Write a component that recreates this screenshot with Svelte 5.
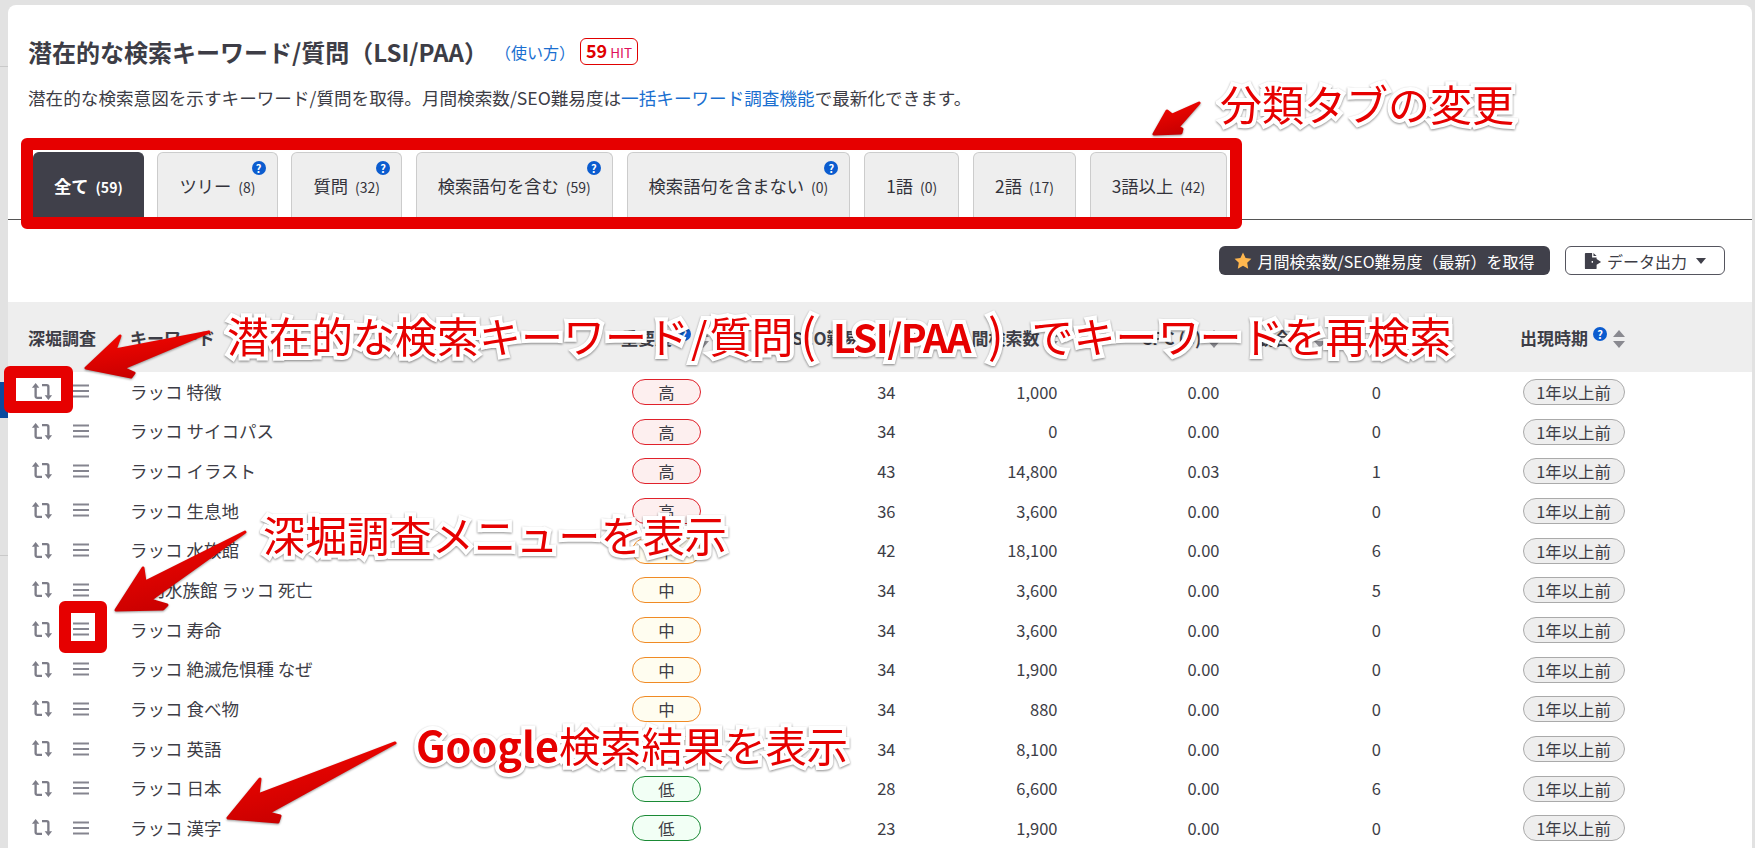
<script lang="ts">
  const tabs = [
    { label: '全て', count: 59, active: true },
    { label: 'ツリー', count: 8, help: true },
    { label: '質問', count: 32, help: true },
    { label: '検索語句を含む', count: 59, help: true },
    { label: '検索語句を含まない', count: 0, help: true },
    { label: '1語', count: 0 },
    { label: '2語', count: 17 },
    { label: '3語以上', count: 42 }
  ];

  const rows = [
    ['ラッコ 特徴', '高', 34, '1,000', '0.00', 0],
    ['ラッコ サイコパス', '高', 34, '0', '0.00', 0],
    ['ラッコ イラスト', '高', 43, '14,800', '0.03', 1],
    ['ラッコ 生息地', '高', 36, '3,600', '0.00', 0],
    ['ラッコ 水族館', '中', 42, '18,100', '0.00', 6],
    ['鳥羽水族館 ラッコ 死亡', '中', 34, '3,600', '0.00', 5],
    ['ラッコ 寿命', '中', 34, '3,600', '0.00', 0],
    ['ラッコ 絶滅危惧種 なぜ', '中', 34, '1,900', '0.00', 0],
    ['ラッコ 食べ物', '中', 34, '880', '0.00', 0],
    ['ラッコ 英語', '中', 34, '8,100', '0.00', 0],
    ['ラッコ 日本', '低', 28, '6,600', '0.00', 6],
    ['ラッコ 漢字', '低', 23, '1,900', '0.00', 0]
  ];

  const level: Record<string, string> = { '高': 'high', '中': 'mid', '低': 'low' };

  const arrows = [
    '209,332 115,350 120,336 86,368 131,377 134,373 123,368',
    '245,532 145,582 143,568 116,610 163,609 167,605 150,600',
    '395,743 258,795 260,779 228,818 278,822 280,816 268,813',
    '1199,103 1172,115 1167,111 1154,134 1181,133 1182,129 1178,127'
  ];
</script>

<div class="page">
  <div class="gutter">
    <i class="rule first"></i>
    <i class="nav-mark"></i>
    <i class="rule second"></i>
  </div>

  <main class="card">
    <div class="title-row">
      <h1>潜在的な検索キーワード/質問（LSI/PAA）</h1>
      <a class="howto" href="#howto">（使い方）</a>
      <span class="hit"><b>59</b> HIT</span>
    </div>
    <p class="desc">潜在的な検索意図を示すキーワード/質問を取得。月間検索数/SEO難易度は<a href="#bulk">一括キーワード調査機能</a>で最新化できます。</p>

    <div class="tabs">
      {#each tabs as tab}
        <button class="tab" class:active={tab.active} type="button">
          {tab.label}<small>({tab.count})</small>
          {#if tab.help}<span class="help corner">?</span>{/if}
        </button>
      {/each}
    </div>

    <div class="actions">
      <button class="btn dark" type="button">
        <svg viewBox="0 0 20 19" width="18" height="17" aria-hidden="true">
          <path d="M10 .6l2.9 6 6.5.9-4.700 4.600 1.100 6.500L10 15.500l-5.800 3.100 1.100-6.500L.6 7.500l6.500-.9z" />
        </svg>
        月間検索数/SEO難易度（最新）を取得
      </button>
      <button class="btn outline" type="button">
        <svg viewBox="0 0 20 20" width="18" height="18" aria-hidden="true">
          <path d="M2 1h7v5h5v4H8.500v2H14v6a1 1 0 0 1-1 1H2a1 1 0 0 1-1-1V2a1 1 0 0 1 1-1zM10.500 1l3.500 3.500h-3.500zM14 7.800l5 3.200-5 3.200v-2.200h-4v-2h4z" />
        </svg>
        データ出力
        <i class="caret"></i>
      </button>
    </div>

    <div class="table">
      <div class="grid thead">
        <div>深堀調査</div>
        <div>キーワード</div>
        <div class="th-imp">重要度<span class="help">?</span><span class="sort"></span></div>
        <div class="num">SEO難易度<span class="sort"></span></div>
        <div class="num">月間検索数<span class="sort"></span></div>
        <div class="num">CPC ($)<span class="sort"></span></div>
        <div class="num ads">競合性<span class="sort"></span></div>
        <div class="th-time">出現時期<span class="help">?</span><span class="sort"></span></div>
      </div>

      {#each rows as row}
        <div class="grid row">
          <div class="tools">
            <svg class="swap" viewBox="0 0 20 16" width="22" height="17" aria-hidden="true">
              <path d="M4 4v8.500a1.500 1.500 0 0 0 1.500 1.500H10M10 2h4.500A1.500 1.500 0 0 1 16 3.500V12" />
              <path class="head" d="M4 0l3.500 4.500h-7zM16 16l-3.500-4.500h7z" />
            </svg>
            <svg class="menu" viewBox="0 0 16 14" width="16" height="14" aria-hidden="true">
              <path d="M0 1.500h16M0 7h16M0 12.500h16" />
            </svg>
          </div>
          <div class="kw">{row[0]}</div>
          <div><span class="pill {level[row[1]]}">{row[1]}</span></div>
          <div class="num">{row[2]}</div>
          <div class="num">{row[3]}</div>
          <div class="num">{row[4]}</div>
          <div class="num">{row[5]}</div>
          <div class="when"><span class="pill age">1年以上前</span></div>
        </div>
      {/each}
    </div>
  </main>

  <!-- red markup drawn on top of the screenshot -->
  <div class="frame frame-tabs"></div>
  <div class="frame frame-swap"></div>
  <div class="frame frame-menu"></div>

  <svg class="arrows" viewBox="0 0 1755 848" aria-hidden="true">
    <defs>
      <linearGradient id="arrow-red" x1="0" y1="0" x2="0.4" y2="1">
        <stop offset="0" stop-color="#f80600" />
        <stop offset="1" stop-color="#c90000" />
      </linearGradient>
    </defs>
    {#each arrows as points}
      <polygon {points} />
    {/each}
  </svg>

  <div class="note n-tabs">分類タブの変更</div>
  <div class="note n-search">潜在的な検索キーワード<span class="slash">/</span>質問<span class="paren open">(</span><b class="lsi">LSI/PAA</b><span class="paren close">)</span>でキーワードを再検索</div>
  <div class="note n-menu">深堀調査メニューを表示</div>
  <div class="note n-google"><b>Google</b>検索結果を表示</div>
</div>

<style>
  :global(body) {
    margin: 0;
    background: #e2e2e2;
  }
  .page {
    position: relative;
    display: flex;
    width: 1755px;
    height: 848px;
    overflow: hidden;
    font-family: "Noto Sans CJK JP", "Noto Sans", sans-serif;
    color: #3d3d46;
  }
  .gutter {
    flex: 0 0 8px;
    display: flex;
    flex-direction: column;
  }
  .rule { height: 1px; background: #c9c9c9; }
  .rule.first { margin-top: 66px; }
  .rule.second { margin-top: 137px; }
  .nav-mark { height: 36px; margin-top: 315px; background: #0a4a9e; }

  .card {
    flex: 0 0 1744px;
    margin-top: 5px;
    padding-top: 33px;
    background: #fff;
    border-radius: 8px 8px 0 0;
    box-sizing: border-box;
  }
  .title-row {
    display: flex;
    align-items: center;
    height: 27px;
    padding-left: 20px;
  }
  h1 {
    margin: 0;
    font-size: 24px;
    font-weight: 700;
    line-height: 27px;
    white-space: nowrap;
  }
  .howto {
    margin-left: 7px;
    color: #1a6fd0;
    font-size: 16px;
    text-decoration: none;
  }
  .hit {
    display: inline-flex;
    align-items: baseline;
    gap: 3px;
    box-sizing: border-box;
    height: 27px;
    margin-left: 5px;
    padding: 0 5px;
    border: 1.500px solid #e00000;
    border-radius: 6px;
    color: #e0105a;
    font-size: 13.500px;
    line-height: 23px;
  }
  .hit b { color: #e00000; font-size: 18px; }
  .desc {
    margin: 21px 0 0;
    padding-left: 20px;
    font-size: 17.600px;
    line-height: 24px;
  }
  .desc a { color: #1a6fd0; text-decoration: none; }

  .tabs {
    display: flex;
    gap: 13.800px;
    height: 67px;
    margin-top: 42px;
    padding-left: 25px;
    border-bottom: 1px solid #555;
  }
  .tab {
    position: relative;
    height: 65px;
    padding: 0 21px;
    border: 1px solid #ccc;
    border-bottom: 0;
    border-radius: 6px 6px 0 0;
    background: #eee;
    color: #33333b;
    font: inherit;
    font-size: 17.300px;
  }
  .tab small { margin-left: 7px; font-size: 14px; }
  .tab.active {
    padding: 0 20px;
    border-color: #40404a;
    background: #40404a;
    color: #fff;
    font-weight: 700;
  }
  .help {
    display: inline-block;
    width: 14px;
    height: 14px;
    border-radius: 50%;
    background: #0b5ccf;
    color: #fff;
    font-size: 11px;
    font-weight: 700;
    line-height: 14px;
    text-align: center;
    vertical-align: 6px;
    margin-left: 5px;
  }
  .help.corner {
    position: absolute;
    top: 8px;
    right: 11px;
    margin: 0;
  }

  .actions {
    display: flex;
    justify-content: flex-end;
    gap: 15px;
    margin-top: 26px;
    padding-right: 27px;
  }
  .btn {
    display: inline-flex;
    align-items: center;
    justify-content: center;
    gap: 5px;
    box-sizing: border-box;
    height: 29px;
    border-radius: 6px;
    font: inherit;
    font-size: 16px;
  }
  .btn.dark {
    width: 331px;
    border: 0;
    background: #40404a;
    color: #fff;
  }
  .btn.dark svg { fill: #ffb74f; }
  .btn.outline {
    width: 160px;
    border: 1px solid #55555e;
    background: #fff;
    color: #3d3d46;
  }
  .btn.outline svg { fill: #40404a; }
  .caret {
    width: 0;
    height: 0;
    margin-left: 4px;
    border: 5px solid transparent;
    border-top: 6px solid #40404a;
    border-bottom: 0;
  }

  .table { margin-top: 27px; }
  .grid {
    display: grid;
    grid-template-columns: 122px 502px 69px 194.500px 162px 162px 161.500px 1fr;
    align-items: center;
  }
  .thead {
    height: 70px;
    background: #eee;
    font-size: 17px;
    font-weight: 700;
  }
  .thead > div:first-child { padding-left: 20px; }
  .th-imp {
    white-space: nowrap;
    margin-left: -11px;
  }
  .th-time { white-space: nowrap; padding-left: 139px; }
  .ads { padding-right: 55px; }
  .sort {
    display: inline-block;
    position: relative;
    width: 12px;
    height: 18px;
    margin-left: 6px;
    vertical-align: -3px;
  }
  .sort::before, .sort::after {
    content: '';
    position: absolute;
    left: 0;
    border-left: 6px solid transparent;
    border-right: 6px solid transparent;
  }
  .sort::before { top: 0; border-bottom: 7px solid #8a8a90; }
  .sort::after { bottom: 0; border-top: 7px solid #8a8a90; }

  .row {
    height: 39.700px;
    font-size: 16.500px;
    line-height: 1;
  }
  .kw { font-size: 17.500px; margin-top: -1px; }
  .num { text-align: right; white-space: nowrap; }
  .tools {
    display: flex;
    align-items: center;
    gap: 20px;
    padding-left: 23px;
    margin-top: -1px;
  }
  .swap path { fill: none; stroke: #7d7d88; stroke-width: 2.200; }
  .swap .head { fill: #7d7d88; stroke: none; }
  .menu path { fill: none; stroke: #85858f; stroke-width: 2.200; }
  .when { padding-left: 141.500px; }

  .pill {
    display: block;
    box-sizing: border-box;
    height: 26px;
    border: 1px solid;
    border-radius: 13px;
    font-size: 16.400px;
    line-height: 24px;
    text-align: center;
  }
  .high { border-color: #e0202a; background: #fdefef; }
  .mid { border-color: #f08a24; background: #fffdf0; }
  .low { border-color: #1a8a35; background: #f2fff5; }
  .age { width: 102px; border-color: #aaa; background: #eee; }

  .frame {
    position: absolute;
    box-sizing: border-box;
    border: 12px solid #e60000;
    border-radius: 6px;
  }
  .frame-tabs { left: 21px; top: 138px; width: 1221px; height: 91px; }
  .frame-swap { left: 4px; top: 366px; width: 69px; height: 47px; }
  .frame-menu { left: 59px; top: 601px; width: 48px; height: 52px; }

  .arrows {
    position: absolute;
    inset: 0;
    width: 1755px;
    height: 848px;
    filter: drop-shadow(0 1px 1px rgba(0, 0, 0, 0.4));
  }
  .arrows polygon {
    fill: url(#arrow-red);
    stroke: url(#arrow-red);
    stroke-width: 3;
    stroke-linejoin: round;
  }

  .note {
    position: absolute;
    color: #e60000;
    font-size: 42px;
    line-height: 50px;
    white-space: nowrap;
    -webkit-text-stroke: 8px #fff;
    paint-order: stroke fill;
    filter: drop-shadow(0 1px 1px rgba(0, 0, 0, 0.45));
  }
  .slash { margin: 0 2px; }
  .paren { font-size: 46px; }
  .paren.open { margin: 0 17px 0 7px; }
  .paren.close { margin: 0 28px 0 18px; }
  .lsi { font-size: 39px; letter-spacing: -1.500px; }
  .n-tabs { left: 1220px; top: 78px; }
  .n-search { left: 227px; top: 308px; }
  .n-menu { left: 263px; top: 509px; font-size: 42.200px; }
  .n-google { left: 416px; top: 719px; font-size: 41.300px; }
</style>
